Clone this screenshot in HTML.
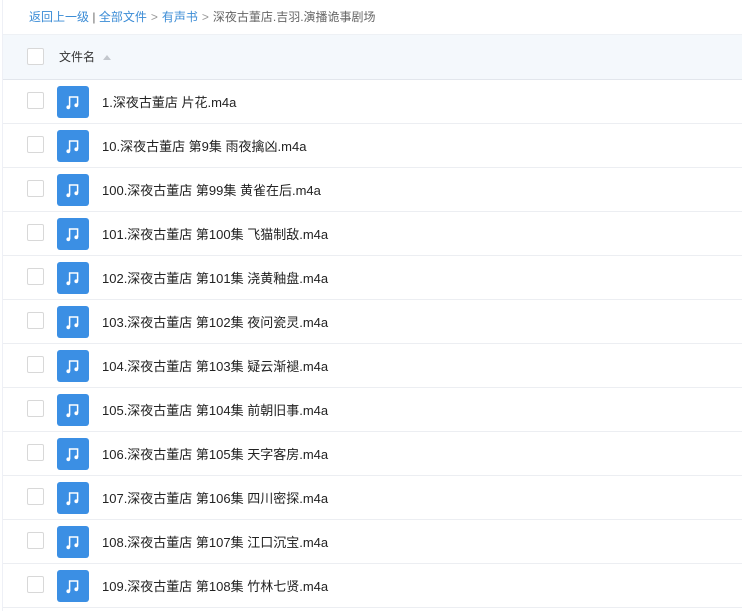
<!DOCTYPE html>
<html><head><meta charset="utf-8"><style>
*{margin:0;padding:0;box-sizing:border-box}
body{width:742px;height:611px;overflow:hidden;background:#fff;font-family:"Liberation Sans","Noto Sans CJK SC",sans-serif;position:relative}
.edge{position:absolute;left:2px;top:0;width:1px;height:611px;background:#eef0f6}
.bc{position:absolute;left:29px;top:8px;font-size:12px;line-height:18px;color:#666}
.bc a{color:#3b8cd6;text-decoration:none}
.bc .g{color:#999;margin:0 4px}
.hd{position:absolute;left:3px;right:0;top:34px;height:46px;background:#f4f8fc;border-top:1px solid #eef1f5;border-bottom:1px solid #e2e6ec}
.cb{position:absolute;left:24px;width:17px;height:17px;border:1px solid #d8d8d8;border-radius:2px;background:#fff}
.hd .cb{top:13px}
.hd .t{position:absolute;left:56px;top:14px;font-size:12px;color:#333;line-height:16px}
.tri{position:absolute;left:100px;top:20px;width:0;height:0;border-left:4px solid transparent;border-right:4px solid transparent;border-bottom:5px solid #c3c7cd}
.row{position:absolute;left:3px;right:0;height:44px;border-bottom:1px solid #eceef2}
.row .cb{top:12px}
.ic{position:absolute;left:54px;top:6px;width:32px;height:32px;background:#3b8fe4;border-radius:3px}
.ic svg{position:absolute;left:0;top:0}
.row .t{position:absolute;left:99px;top:14px;font-size:13px;line-height:17px;color:#222}
</style></head><body>
<div class="edge"></div>
<div class="bc"><a>返回上一级</a> | <a>全部文件</a><span class="g">&gt;</span><a>有声书</a><span class="g">&gt;</span>深夜古董店.吉羽.演播诡事剧场</div>
<div class="hd"><div class="cb"></div><div class="t">文件名</div><div class="tri"></div></div>
<div id="rows"></div>
<script>
var n=["1.深夜古董店 片花.m4a","10.深夜古董店 第9集 雨夜擒凶.m4a","100.深夜古董店 第99集 黄雀在后.m4a","101.深夜古董店 第100集 飞猫制敌.m4a","102.深夜古董店 第101集 浇黄釉盘.m4a","103.深夜古董店 第102集 夜问瓷灵.m4a","104.深夜古董店 第103集 疑云渐褪.m4a","105.深夜古董店 第104集 前朝旧事.m4a","106.深夜古董店 第105集 天字客房.m4a","107.深夜古董店 第106集 四川密探.m4a","108.深夜古董店 第107集 江口沉宝.m4a","109.深夜古董店 第108集 竹林七贤.m4a"];
var s='';
var svg='<svg width="32" height="32" viewBox="0 0 32 32"><path d="M12.6 21V11H20.6V19" fill="none" stroke="#fff" stroke-width="1.5"/><circle cx="11.3" cy="21.3" r="1.9" fill="#fff"/><circle cx="19.3" cy="19.3" r="1.9" fill="#fff"/></svg>';
for(var i=0;i<n.length;i++){s+='<div class="row" style="top:'+(80+i*44)+'px"><div class="cb"></div><div class="ic">'+svg+'</div><div class="t">'+n[i]+'</div></div>';}
document.getElementById('rows').innerHTML=s;
</script>
</body></html>
